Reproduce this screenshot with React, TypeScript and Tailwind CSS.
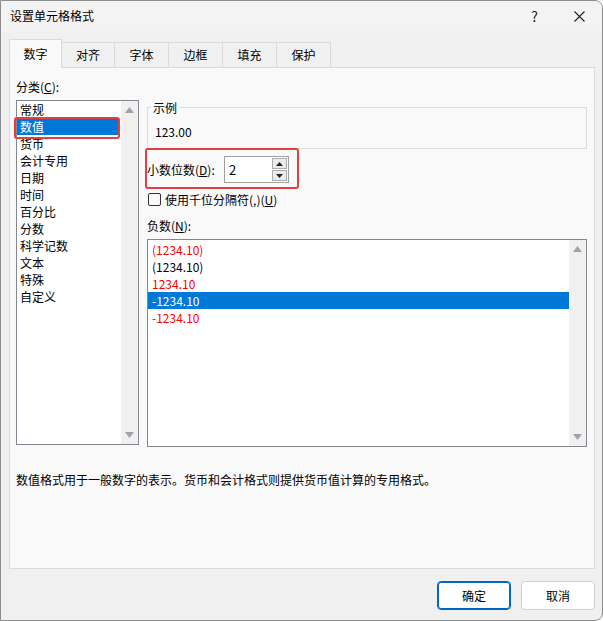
import React from 'react';

const tabs = ['数字', '对齐', '字体', '边框', '填充', '保护'];
const tabWidths = ['w-[53px]', 'w-[53px]', 'w-[54px]', 'w-[54px]', 'w-[54px]', 'w-[54px]'];

const categories = ['常规', '数值', '货币', '会计专用', '日期', '时间', '百分比', '分数', '科学记数', '文本', '特殊', '自定义'];

const negatives = [
  { text: '(1234.10)', red: true },
  { text: '(1234.10)', red: false },
  { text: '1234.10', red: true },
  { text: '-1234.10', red: false, selected: true },
  { text: '-1234.10', red: true },
];

const ArrowUp = () => (
  <svg width="9" height="6" viewBox="0 0 9 6">
    <path d="M4.5 0 L9 6 L0 6 Z" fill="#a3a3a3" />
  </svg>
);

const ArrowDown = () => (
  <svg width="9" height="6" viewBox="0 0 9 6">
    <path d="M0 0 L9 0 L4.5 6 Z" fill="#a3a3a3" />
  </svg>
);

const Scrollbar: React.FC = () => (
  <div className="w-[17px] bg-[#f0f0f0] flex flex-col items-center justify-between py-[6px]">
    <ArrowUp />
    <ArrowDown />
  </div>
);

const App: React.FC = () => {
  return (
    <div className="relative w-[603px] h-[621px] bg-[#f0f0f0] border border-[#8c8c8c] rounded-tr-[8px] rounded-br-[8px] overflow-hidden font-['Noto_Sans_CJK_SC',sans-serif] text-[12px] text-black">
      {/* title bar */}
      <div className="h-[30px] bg-[#f3f3f3] flex items-center pl-[9px]">
        <span className="text-[12px]">设置单元格格式</span>
        <span className="ml-auto mr-[36px] text-[14px] text-[#222]">?</span>
        <svg width="11" height="11" viewBox="0 0 11 11" className="mr-[17px]">
          <path d="M0.5 0.5 L10.5 10.5 M10.5 0.5 L0.5 10.5" stroke="#222" strokeWidth="1.1" />
        </svg>
      </div>

      {/* tabs */}
      <div className="h-[36px] flex items-end pl-[8px]">
        {tabs.map((t, i) =>
          i === 0 ? (
            <div
              key={t}
              className={`${tabWidths[i]} h-[29px] -mb-px relative z-10 bg-[#f9f9f9] border-t border-l border-r border-[#dadada] flex items-center justify-center`}
            >
              {t}
            </div>
          ) : (
            <div
              key={t}
              className={`${tabWidths[i]} h-[25px] bg-[#f0f0f0] border-t border-r border-[#dadada] flex items-center justify-center`}
            >
              {t}
            </div>
          )
        )}
      </div>

      {/* panel */}
      <div className="ml-[8px] w-[586px] h-[502px] border border-[#dadada] bg-[#f9f9f9] pt-[11px] pl-[6px]">
        <div className="leading-[16px]">
          分类(<span className="underline">C</span>):
        </div>
        <div className="flex items-start mt-[5px]">
          {/* category list */}
          <div className="w-[123px] h-[345px] border border-[#828790] bg-white flex">
            <div className="flex-1 pr-[3px]">
              {categories.map((c, i) => (
                <div
                  key={c}
                  className={`h-[17px] leading-[17px] pl-[3px] ${i === 1 ? 'bg-[#0078d7] text-white' : ''}`}
                >
                  {c}
                </div>
              ))}
            </div>
            <Scrollbar />
          </div>

          {/* right column */}
          <div className="ml-[8px] w-[440px]">
            <div className="relative pt-[7px]">
              <div className="h-[42px] border border-[#dcdcdc] pt-[16px] pl-[7px] leading-[16px]">123.00</div>
              <div className="absolute top-0 left-[4px] px-[2px] bg-[#f9f9f9] leading-[16px]">示例</div>
            </div>

            <div className="flex items-center mt-[7px] h-[27px]">
              <span className="w-[77px]">
                小数位数(<span className="underline">D</span>):
              </span>
              <div className="w-[65px] h-[27px] border border-[#a0a0a0] bg-white flex items-center pl-[4px] pr-[1px]">
                <span className="text-[13px] flex-1">2</span>
                <div className="flex flex-col gap-[1px]">
                  <div className="w-[15px] h-[11px] border border-[#adadad] bg-[#ececec] flex items-center justify-center">
                    <svg width="7" height="4" viewBox="0 0 7 4">
                      <path d="M3.5 0 L7 4 L0 4 Z" fill="#222" />
                    </svg>
                  </div>
                  <div className="w-[15px] h-[11px] border border-[#adadad] bg-[#ececec] flex items-center justify-center">
                    <svg width="7" height="4" viewBox="0 0 7 4">
                      <path d="M0 0 L7 0 L3.5 4 Z" fill="#222" />
                    </svg>
                  </div>
                </div>
              </div>
            </div>

            <div className="flex items-center mt-[10px] h-[13px]">
              <div className="w-[13px] h-[13px] border border-[#333] rounded-[2px] bg-[#f9f9f9] ml-[1px]" />
              <span className="ml-[4px] leading-[16px]">
                使用千位分隔符(,)(<span className="underline">U</span>)
              </span>
            </div>

            <div className="mt-[12px] leading-[16px]">
              负数(<span className="underline">N</span>):
            </div>

            <div className="mt-[5px] w-[440px] h-[208px] border border-[#828790] bg-white flex">
              <div className="flex-1 pt-[1px]">
                {negatives.map((n, i) => (
                  <div
                    key={i}
                    className={`h-[17px] leading-[17px] pl-[4px] ${
                      n.selected ? 'bg-[#0078d7] text-white' : n.red ? 'text-[#ff0000]' : 'text-black'
                    }`}
                  >
                    {n.text}
                  </div>
                ))}
              </div>
              <Scrollbar />
            </div>
          </div>
        </div>

        <div className="mt-[25px] leading-[16px]">数值格式用于一般数字的表示。货币和会计格式则提供货币值计算的专用格式。</div>
      </div>

      {/* buttons */}
      <div className="flex justify-end gap-[10px] mt-[12px] pr-[7px]">
        <button className="w-[74px] h-[29px] bg-white border border-[#0067c0] rounded-[4px] shadow-[inset_0_0_0_1px_#0067c0]">确定</button>
        <button className="w-[74px] h-[29px] bg-white border border-[#d0d0d0] rounded-[4px]">取消</button>
      </div>

      {/* highlight boxes */}
      <div className="absolute left-[8px] top-[38px] w-[53px] h-[29px] border-2 border-[#e53e3e] rounded-[3px] pointer-events-none" />
      <div className="absolute left-[13px] top-[116px] w-[106px] h-[22px] border-2 border-[#e53e3e] rounded-[3px] pointer-events-none" />
      <div className="absolute left-[144px] top-[147px] w-[154px] h-[41px] border-2 border-[#e53e3e] rounded-[3px] pointer-events-none" />
    </div>
  );
};

export default App;
